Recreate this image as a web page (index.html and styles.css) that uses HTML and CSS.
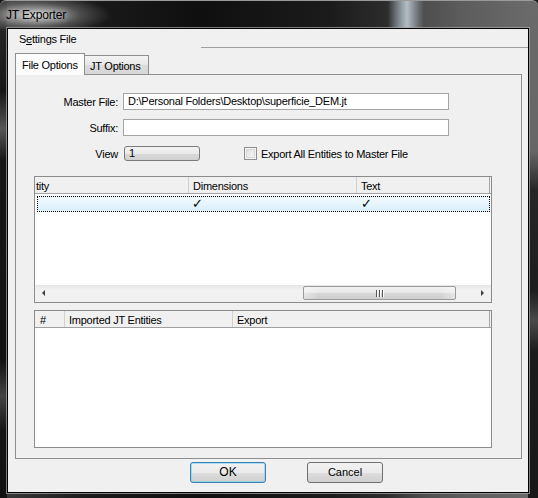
FILE: index.html
```html
<!DOCTYPE html>
<html>
<head>
<meta charset="utf-8">
<title>JT Exporter</title>
<link rel="stylesheet" href="styles.css">
</head>
<body>
<div class="window">
  <div class="titlebar"><span class="title">JT Exporter</span></div>
  <div class="client">
    <div class="menubar">
      <span class="menu-item">S<u>e</u>ttings File</span>
      <span class="menu-line"></span>
    </div>
    <div class="tabstrip">
      <div class="tab active">File Options</div>
      <div class="tab">JT Options</div>
    </div>
    <div class="panel">
      <div class="form">
        <span class="label">Master File:</span>
        <div class="textbox">D:\Personal Folders\Desktop\superficie_DEM.jt</div>
        <span class="label">Suffix:</span>
        <div class="textbox"></div>
      </div>
      <div class="view-row">
        <span class="label">View</span>
        <div class="combo">1</div>
        <span class="checkbox"></span>
        <span class="check-label">Export All Entities to Master File</span>
      </div>
      <div class="listview lv1">
        <div class="lv-header">
          <div class="hcol a1 first">tity</div>
          <div class="hcol a2">Dimensions</div>
          <div class="hcol a3">Text</div>
        </div>
        <div class="lv-body">
          <div class="row selected">
            <div class="cell r1"></div>
            <div class="cell r2">✓</div>
            <div class="cell r3">✓</div>
          </div>
        </div>
        <div class="hscroll">
          <div class="sb-btn"><span class="arrow-left"></span></div>
          <div class="sb-track">
            <div class="sb-thumb"><span class="grip"></span><span class="grip"></span><span class="grip"></span></div>
          </div>
          <div class="sb-btn"><span class="arrow-right"></span></div>
        </div>
      </div>
      <div class="listview lv2">
        <div class="lv-header">
          <div class="hcol b1">#</div>
          <div class="hcol b2">Imported JT Entities</div>
          <div class="hcol b3">Export</div>
        </div>
        <div class="lv-body"></div>
      </div>
    </div>
    <div class="buttons">
      <div class="button default">OK</div>
      <div class="button cancel">Cancel</div>
    </div>
  </div>
</div>
</body>
</html>
```
FILE: styles.css
```css
* { box-sizing: border-box; }
html, body { margin: 0; padding: 0; }
body {
  width: 538px;
  height: 498px;
  overflow: hidden;
  font-family: "Liberation Sans", Arial, sans-serif;
  font-size: 11px;
  letter-spacing: -0.25px;
  color: #000;
  background: #1a1a1a;
}
.window {
  width: 538px;
  height: 498px;
  position: relative;
  border-radius: 6px 6px 0 0;
  overflow: hidden;
  border-top: 1px solid #9a9a9a;
  background:
    radial-gradient(ellipse 75px 20px at 36px 14px, rgba(215,215,215,0.95), rgba(160,160,160,0.35) 60%, rgba(0,0,0,0) 100%) 0 0 / 538px 28px no-repeat,
    linear-gradient(90deg, rgba(0,0,0,0) 388px, rgba(150,160,168,0.85) 400px, rgba(185,196,204,0.95) 407px, rgba(150,158,165,0.8) 414px, rgba(0,0,0,0) 424px) 0 0 / 538px 28px no-repeat,
    linear-gradient(180deg, #6a6a6a 0, #666 150px, #262626 190px, #1e1e1e 290px, #4a4a4a 320px, #1c1c1c 350px, #181818 498px) right 0 top 0 / 10px 498px no-repeat,
    linear-gradient(180deg, #2b2b2b 0, #161616 90px, #555 128px, #161616 160px, #121212 360px, #444 395px, #141414 430px, #111 498px) 0 0 / 7px 498px no-repeat,
    linear-gradient(90deg, #3a3a3a 0, #1a1a1a 90px, #0f0f0f 200px, #1b1b1b 330px, #2c2c2c 385px, #4e4e4e 424px, #5c5c5c 460px, #6c6c6c 538px);
}
.titlebar {
  height: 27px;
  padding: 0 0 0 6px;
}
.title {
  display: block;
  font-size: 12px;
  letter-spacing: -0.15px;
  line-height: 26px;
  padding-top: 1px;
  color: #000;
  text-shadow: 0 0 6px rgba(255,255,255,0.7);
}
.client {
  margin-left: 7px;
  width: 522px;
  height: 465px;
  border: 1px solid #000;
  box-shadow: 0 0 0 1px rgba(170,170,170,0.7);
  background: #f0f0f0;
  display: flex;
  flex-direction: column;
}
.menubar {
  height: 19px;
  display: flex;
  align-items: flex-end;
}
.menu-item {
  padding-left: 11px;
  line-height: 18px;
  padding-top: 1px;
  height: 19px;
  white-space: nowrap;
}
.menu-item u { text-decoration: underline; text-underline-offset: 1px; }
.menu-line {
  flex: 1;
  margin-left: 125px;
  height: 1px;
  background: #a0a0a0;
}
.tabstrip {
  display: flex;
  align-items: flex-end;
  height: 21px;
  margin: 5px 0 0 7px;
}
.tab {
  height: 19px;
  border: 1px solid #8e8f8f;
  border-bottom: none;
  padding: 3px 0 0 5px;
  line-height: 15px;
  white-space: nowrap;
  background: linear-gradient(#f3f3f3, #e8e8e8 50%, #dcdcdc 51%, #d6d6d6);
}
.tab.active {
  height: 22px;
  margin-bottom: -1px;
  position: relative;
  z-index: 1;
  background: #fcfcfc;
  padding: 4px 0 0 6px;
  width: 70px;
}
.tab + .tab { width: 64px; border-left: none; }
.panel {
  margin-left: 7px;
  width: 507px;
  height: 385px;
  border: 1px solid #8e8f8f;
  background: #f0f0f0;
  display: flex;
  flex-direction: column;
  padding-top: 18px;
}
.form {
  display: grid;
  grid-template-columns: 102px 326px;
  column-gap: 5px;
  row-gap: 9px;
  align-items: center;
}
.label {
  text-align: right;
  white-space: nowrap;
}
.textbox {
  height: 17px;
  border: 1px solid #a5a5a5;
  background: #fff;
  padding-left: 4px;
  line-height: 15px;
  white-space: nowrap;
  overflow: hidden;
}
.view-row {
  display: flex;
  align-items: center;
  margin-top: 10px;
  height: 15px;
}
.view-row .label { width: 102px; }
.combo {
  margin-left: 6px;
  width: 76px;
  height: 15px;
  border: 1px solid #7a7a7a;
  border-radius: 3px;
  background: linear-gradient(#f4f4f4, #e9e9e9 50%, #dadada 51%, #d0d0d0);
  padding-left: 4px;
  line-height: 13px;
}
.checkbox {
  margin-left: 44px;
  width: 13px;
  height: 13px;
  border: 1px solid #8f8f8f;
  background: linear-gradient(135deg, #dcdcdc, #fbfbfb);
  box-shadow: inset 0 0 0 1px #f4f4f4, inset 0 0 0 2px #d8d8d8;
}
.check-label { margin-left: 4px; white-space: nowrap; }
.listview {
  margin-left: 18px;
  width: 458px;
  border: 1px solid #8c8c8c;
  background: #fff;
  display: flex;
  flex-direction: column;
  overflow: hidden;
}
.lv1 { margin-top: 15px; height: 127px; }
.lv2 { margin-top: 7px; height: 138px; }
.lv-header {
  display: flex;
  height: 17px;
  border-bottom: 1px solid #a0a0a0;
  background: #f0f0f0;
  flex: none;
}
.hcol {
  height: 16px;
  padding: 2px 0 0 4px;
  line-height: 14px;
  border-right: 1px solid #d0d0d0;
  white-space: nowrap;
  overflow: hidden;
}
.hcol.first { padding-left: 1px; }
.a1 { width: 154px; }
.a2 { width: 168px; }
.a3 { width: 133px; border-right: 1px solid #a8a8a8; }
.b1 { width: 30px; padding-left: 5px; }
.b2 { width: 168px; }
.b3 { width: 257px; border-right: 1px solid #a8a8a8; }
.lv-body { flex: 1; padding-top: 2px; }
.row {
  margin-left: 2px;
  width: 453px;
  height: 16px;
  display: flex;
}
.row.selected {
  border: 1px dotted #000;
  background: linear-gradient(#f2f9fe, #d9effb);
}
.cell { line-height: 13px; font-family: "DejaVu Sans", sans-serif; font-size: 13px; letter-spacing: 0; }
.r1 { width: 151px; }
.r2 { width: 168px; padding-left: 3px; }
.r3 { width: 132px; padding-left: 4px; }
.hscroll {
  height: 17px;
  display: flex;
  flex: none;
  background: linear-gradient(#e6e6e6, #f2f2f2 30%, #f0f0f0);
}
.sb-btn {
  width: 17px;
  height: 17px;
  display: flex;
  align-items: center;
  justify-content: center;
}
.arrow-left {
  width: 0; height: 0;
  border-top: 3px solid transparent;
  border-bottom: 3px solid transparent;
  border-right: 3px solid #3c3c3c;
  margin-top: -2px;
}
.arrow-right {
  width: 0; height: 0;
  border-top: 3px solid transparent;
  border-bottom: 3px solid transparent;
  border-left: 3px solid #3c3c3c;
  margin-top: -2px;
}
.sb-track {
  flex: 1;
  padding: 1px 0 0 251px;
}
.sb-thumb {
  width: 153px;
  height: 14px;
  border: 1px solid #999;
  border-radius: 2px;
  background: linear-gradient(90deg, rgba(255,255,255,0.4), rgba(255,255,255,0) 10%, rgba(255,255,255,0) 90%, rgba(255,255,255,0.4)), linear-gradient(#f1f1f1, #e6e6e6 50%, #d7d7d7 51%, #cecece);
  display: flex;
  justify-content: center;
  align-items: center;
  gap: 2px;
}
.grip {
  width: 1px;
  height: 7px;
  background: #555;
  box-shadow: 1px 0 0 #fff;
}
.buttons {
  display: flex;
  margin-top: 3px;
  padding-left: 182px;
}
.button {
  width: 76px;
  height: 21px;
  border: 1px solid #707070;
  border-radius: 3px;
  background: linear-gradient(#f2f2f2, #ebebeb 50%, #dddddd 51%, #cfcfcf);
  text-align: center;
  line-height: 19px;
  font-size: 12px;
  letter-spacing: 0;
}
.button.default {
  border-color: #3c7fb1;
  box-shadow: inset 0 0 0 1px rgba(120,210,245,0.6);
}
.button.cancel { margin-left: 41px; font-size: 11px; }
```
